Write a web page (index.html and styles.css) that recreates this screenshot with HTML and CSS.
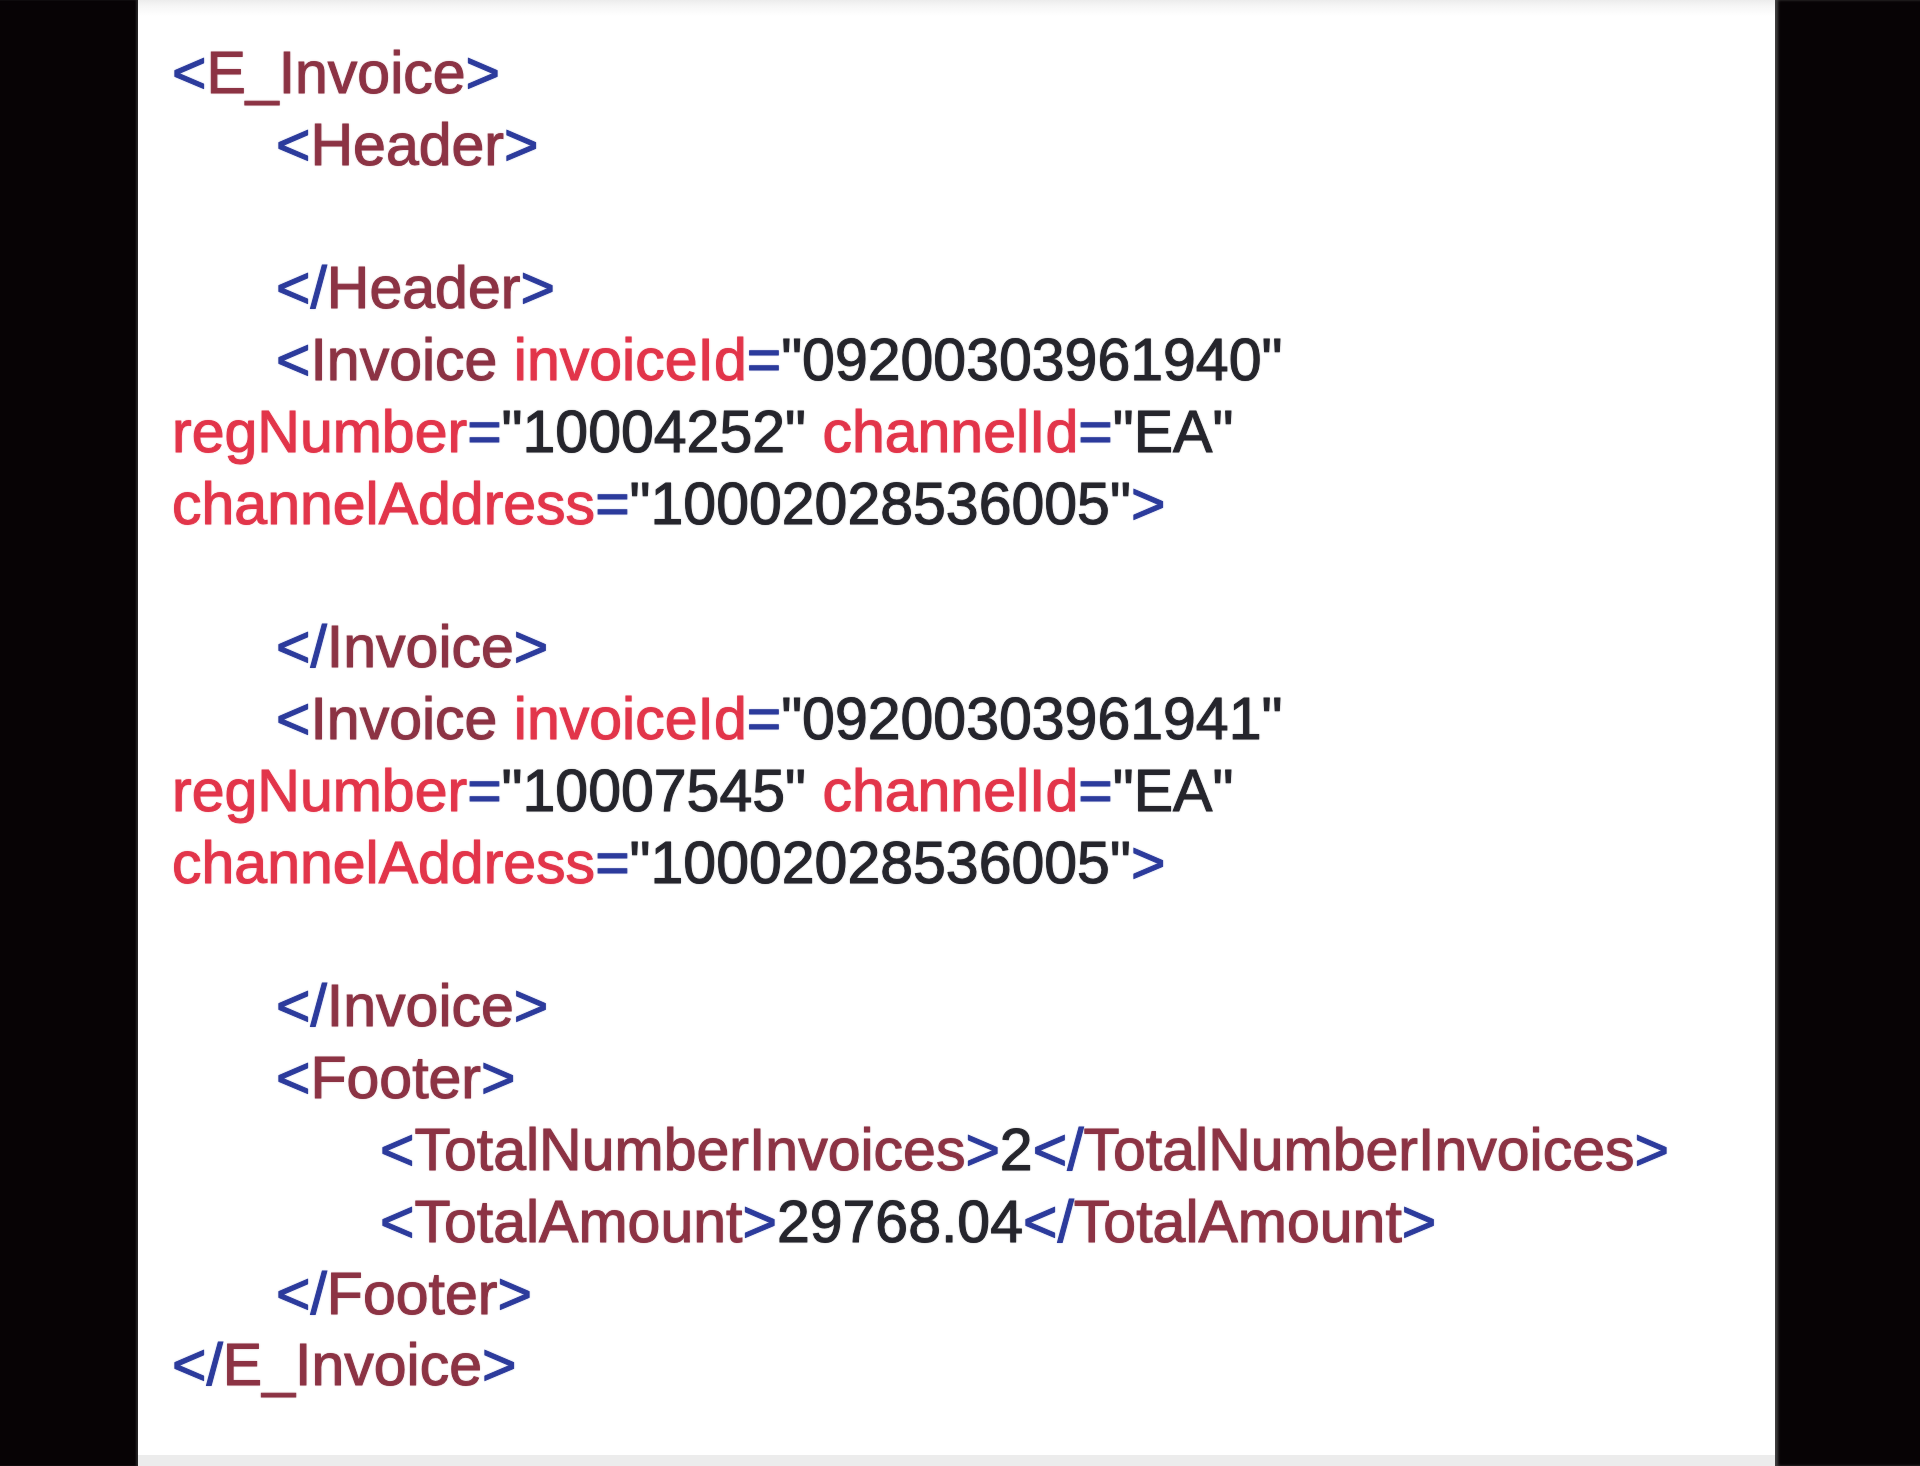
FILE: index.html
```html
<!DOCTYPE html>
<html lang="en">
<head>
<meta charset="utf-8">
<title>E_Invoice XML</title>
<link rel="stylesheet" href="styles.css">
</head>
<body>
<div class="frame">
  <div class="edge edge-left"></div>
  <main class="sheet">
    <div class="code">
      <div class="ln"><span class="p">&lt;</span><span class="t">E_Invoice</span><span class="p">&gt;</span></div>
      <div class="ln i1"><span class="p">&lt;</span><span class="t">Header</span><span class="p">&gt;</span></div>
      <div class="ln blank"></div>
      <div class="ln i1"><span class="p">&lt;/</span><span class="t">Header</span><span class="p">&gt;</span></div>
      <div class="ln i1"><span class="p">&lt;</span><span class="t">Invoice</span> <span class="a">invoiceId</span><span class="p">=</span><span class="v">"09200303961940"</span></div>
      <div class="ln"><span class="a">regNumber</span><span class="p">=</span><span class="v">"10004252"</span> <span class="a">channelId</span><span class="p">=</span><span class="v">"EA"</span></div>
      <div class="ln"><span class="a">channelAddress</span><span class="p">=</span><span class="v">"10002028536005"</span><span class="p">&gt;</span></div>
      <div class="ln blank"></div>
      <div class="ln i1"><span class="p">&lt;/</span><span class="t">Invoice</span><span class="p">&gt;</span></div>
      <div class="ln i1"><span class="p">&lt;</span><span class="t">Invoice</span> <span class="a">invoiceId</span><span class="p">=</span><span class="v">"09200303961941"</span></div>
      <div class="ln"><span class="a">regNumber</span><span class="p">=</span><span class="v">"10007545"</span> <span class="a">channelId</span><span class="p">=</span><span class="v">"EA"</span></div>
      <div class="ln"><span class="a">channelAddress</span><span class="p">=</span><span class="v">"10002028536005"</span><span class="p">&gt;</span></div>
      <div class="ln blank"></div>
      <div class="ln i1"><span class="p">&lt;/</span><span class="t">Invoice</span><span class="p">&gt;</span></div>
      <div class="ln i1"><span class="p">&lt;</span><span class="t">Footer</span><span class="p">&gt;</span></div>
      <div class="ln i2"><span class="p">&lt;</span><span class="t">TotalNumberInvoices</span><span class="p">&gt;</span><span class="v">2</span><span class="p">&lt;/</span><span class="t">TotalNumberInvoices</span><span class="p">&gt;</span></div>
      <div class="ln i2"><span class="p">&lt;</span><span class="t">TotalAmount</span><span class="p">&gt;</span><span class="v">29768.04</span><span class="p">&lt;/</span><span class="t">TotalAmount</span><span class="p">&gt;</span></div>
      <div class="ln i1"><span class="p">&lt;/</span><span class="t">Footer</span><span class="p">&gt;</span></div>
      <div class="ln"><span class="p">&lt;/</span><span class="t">E_Invoice</span><span class="p">&gt;</span></div>
    </div>
  </main>
  <div class="edge edge-right"></div>
</div>
</body>
</html>
```
FILE: styles.css
```css
html, body {
  margin: 0;
  padding: 0;
  background: #070305;
}

.frame {
  display: grid;
  grid-template-columns: 138px 1fr 145px;
  height: 1466px;
  overflow: hidden;
}

.edge {
  background: #070305;
}

.edge-left {
  box-shadow: inset -2px 0 2px rgba(60, 60, 60, 0.6);
}

.edge-right {
  box-shadow: inset 3px 0 3px rgba(90, 90, 90, 0.7);
}

.sheet {
  background: linear-gradient(#ececec 0, #f6f6f6 6px, #ffffff 16px);
  border-bottom: 11px solid #ececec;
  padding: 38px 0 0 34px;
  box-sizing: border-box;
  height: 1466px;
}

.code {
  font-family: "Liberation Sans", Arial, sans-serif;
  font-size: 59px;
  line-height: 71.8px;
}

.ln {
  height: 71.8px;
  white-space: pre;
  -webkit-text-stroke: 1px currentColor;
}

.i1 {
  padding-left: 104px;
}

.i2 {
  padding-left: 208px;
}

.p {
  color: #2c3b9c;
  text-shadow: 0 0 2px rgba(44, 59, 156, 0.6);
}

.t {
  color: #8c3344;
  text-shadow: 0 0 2px rgba(140, 51, 68, 0.6);
}

.a {
  color: #e2354a;
  text-shadow: 0 0 2px rgba(226, 53, 74, 0.6);
}

.v {
  color: #25252c;
  text-shadow: 0 0 2px rgba(37, 37, 44, 0.6);
}
```
